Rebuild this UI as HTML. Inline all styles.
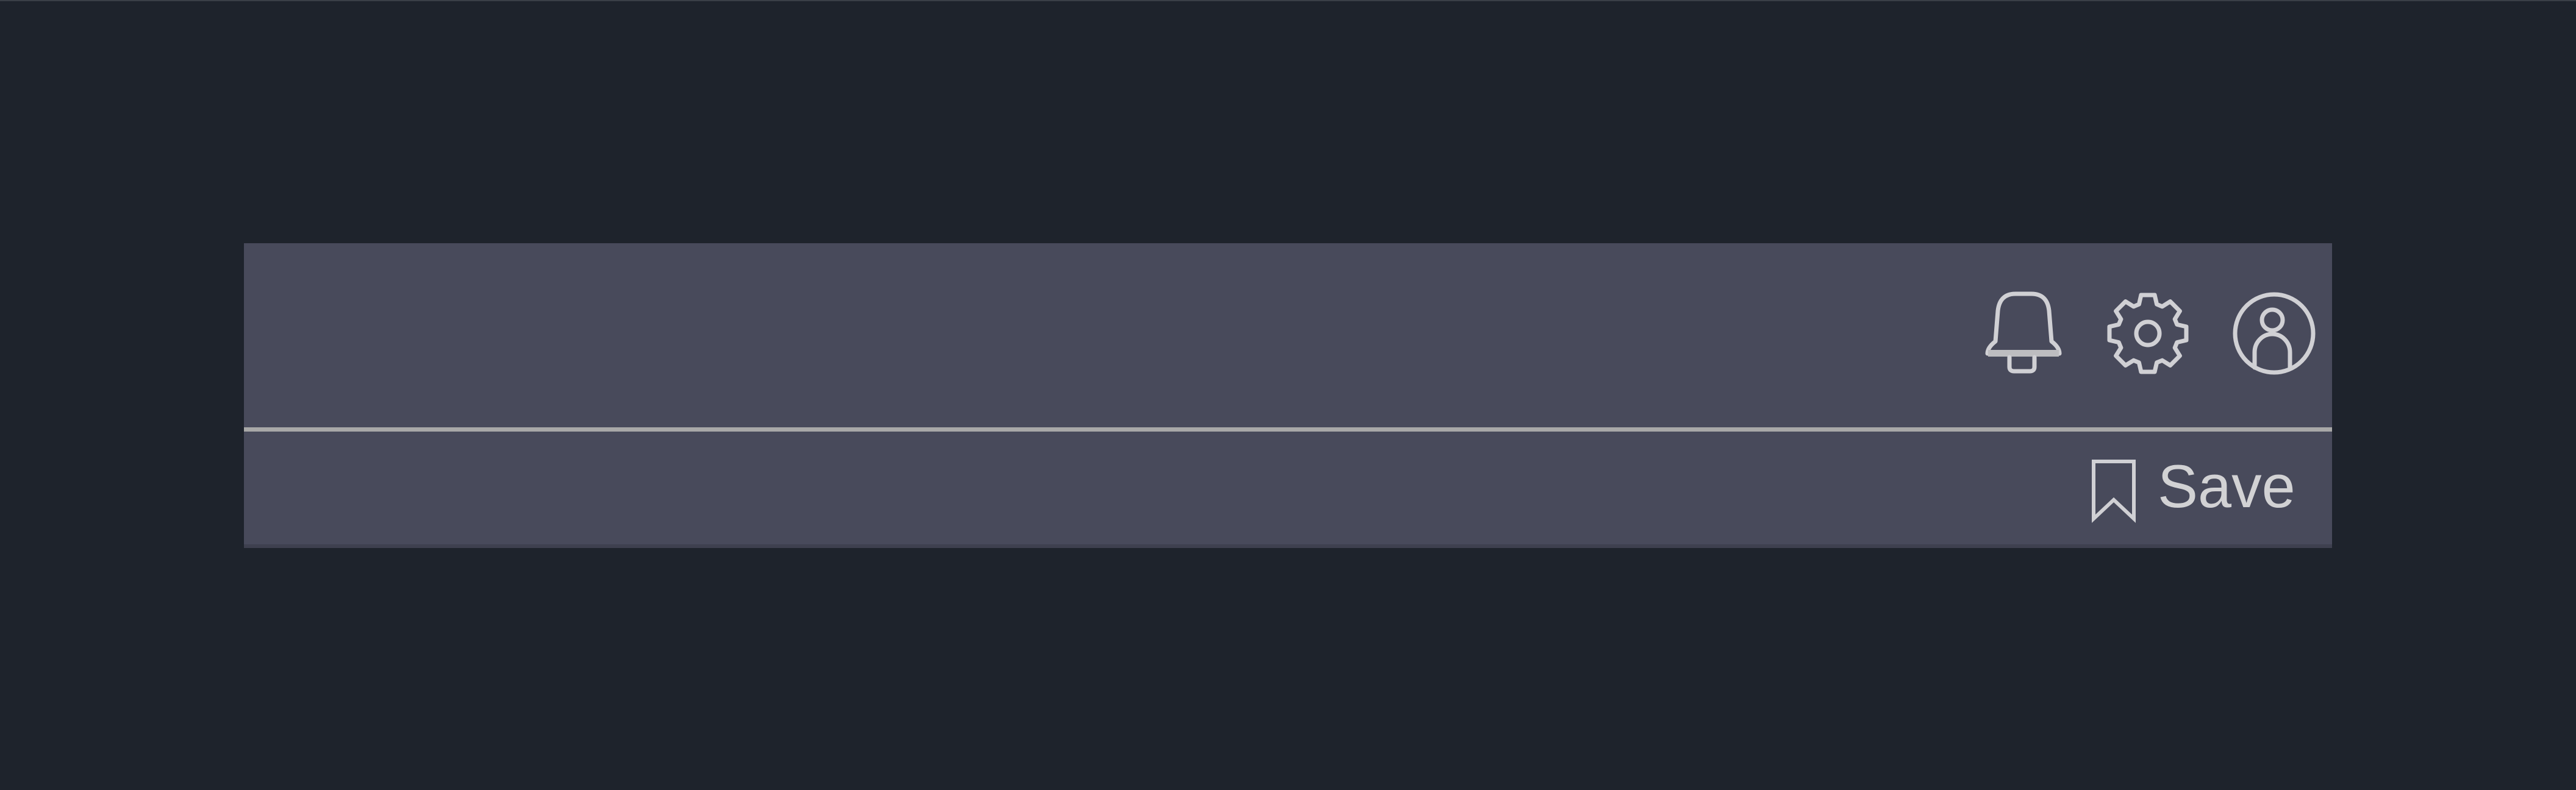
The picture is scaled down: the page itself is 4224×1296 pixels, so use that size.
<!DOCTYPE html>
<html><head><meta charset="utf-8"><style>
html,body{margin:0;padding:0;}
body{width:4224px;height:1296px;background:#1e232c;position:relative;overflow:hidden;font-family:"Liberation Sans",sans-serif;}
.top{position:absolute;left:0;top:0;width:4224px;height:2px;background:#3a3f47;}
.panel{position:absolute;left:400px;top:399px;width:3424px;height:500px;background:#484a5b;}
.bb{position:absolute;left:400px;top:893px;width:3424px;height:6px;background:#3e404f;}
.div{position:absolute;left:400px;top:701px;width:3424px;height:7px;background:#a8a8a8;}
.save{position:absolute;left:3538px;top:742px;font-size:99px;line-height:112px;color:#d2d2d4;}
svg{position:absolute;left:0;top:0;}
</style></head><body>
<div class="top"></div>
<div class="panel"></div>
<div class="bb"></div>
<div class="div"></div>
<svg width="4224" height="1296" fill="none" stroke="#d0d0d4" stroke-width="7" stroke-linejoin="round" stroke-linecap="round">
<g transform="translate(3253,478)">
<path d="M6,102 Q6,92 19,82 L23,32 Q26,4 52,4 H78 Q104,4 107,32 L111,82 Q124,92 124,102 Z"/>
<rect x="7" y="96" width="116" height="11" fill="#bdbdc0" stroke="none"/>
<path d="M42,108 V124 Q42,131 50,131 H75 Q83,131 83,124 V108"/>
</g>
<g transform="translate(3451,478)">
<polygon points="118.8,54.4 134,57.9 134,80.1 118.8,83.6 115.2,92.5 123.4,105.7 107.7,121.4 94.5,113.2 85.6,116.8 82.1,132 59.9,132 56.4,116.8 47.6,113.2 34.3,121.4 18.6,105.7 26.9,92.5 23.2,83.6 8,80.1 8,57.9 23.2,54.4 26.9,45.6 18.6,32.3 34.3,16.6 47.6,24.9 56.4,21.2 59.9,6 82.1,6 85.6,21.2 94.5,24.9 107.7,16.6 123.4,32.3 115.2,45.6"/>
<circle cx="71" cy="69" r="19"/>
</g>
<circle cx="3729" cy="547" r="64"/>
<circle cx="3726" cy="525" r="17"/>
<path d="M3697,603 V578 A29 30 0 0 1 3755 578 V603"/>
<path d="M3433,757 H3499 V851 L3466,820 L3433,851 Z" stroke-width="6" stroke-linecap="butt" stroke-linejoin="miter"/>
</svg>
<div class="save">Save</div>
</body></html>
